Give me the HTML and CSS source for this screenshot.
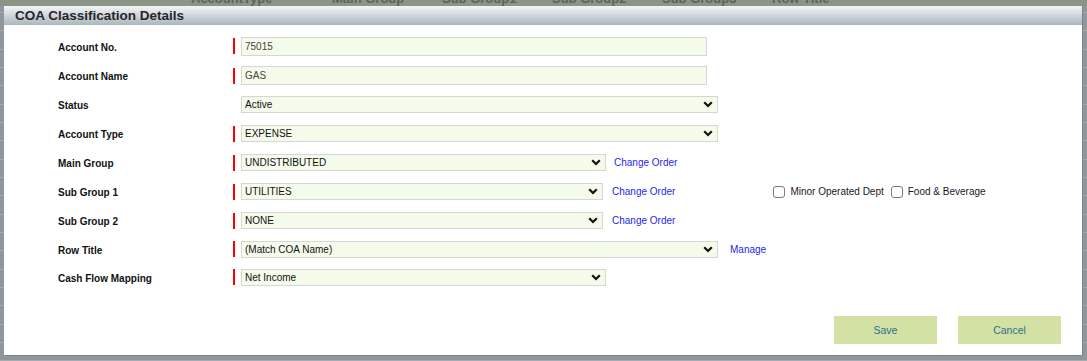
FILE: index.html
```html
<!DOCTYPE html>
<html lang="en">

<head>
    <meta charset="UTF-8">
    <meta name="viewport" content="width=device-width, initial-scale=1.0">
    <title>COA Classification Details</title>

    <link rel="stylesheet" href="styles.css">
</head>

<body>

    <div class="grid-head">
        <span class="col c-type">AccountType</span>
        <span class="col c-main">Main Group</span>
        <span class="col c-sub">Sub Group1</span>
        <span class="col c-sub">Sub Group2</span>
        <span class="col c-sub">Sub Group3</span>
        <span class="col">Row Title</span>
    </div>

    <div class="dialog">
        <div class="dialog-title">COA Classification Details</div>

        <form class="dialog-body">
            <div class="row first">
                <label class="row-label">Account No.</label>
                <span class="req"></span>
                <input class="field text-field" type="text" value="75015">
            </div>

            <div class="row">
                <label class="row-label">Account Name</label>
                <span class="req"></span>
                <input class="field text-field" type="text" value="GAS">
            </div>

            <div class="row">
                <label class="row-label">Status</label>
                <span class="req off"></span>
                <select class="field select-field wide">
                    <option>Active</option>
                </select>
            </div>

            <div class="row">
                <label class="row-label">Account Type</label>
                <span class="req"></span>
                <select class="field select-field wide">
                    <option>EXPENSE</option>
                </select>
            </div>

            <div class="row">
                <label class="row-label">Main Group</label>
                <span class="req"></span>
                <select class="field select-field group main">
                    <option>UNDISTRIBUTED</option>
                </select>
                <a href="#" class="link">Change Order</a>
            </div>

            <div class="row">
                <label class="row-label">Sub Group 1</label>
                <span class="req"></span>
                <select class="field select-field group">
                    <option>UTILITIES</option>
                </select>
                <a href="#" class="link">Change Order</a>
                <div class="checks">
                    <label class="check"><input type="checkbox"> Minor Operated Dept</label>
                    <label class="check"><input type="checkbox"> Food &amp; Beverage</label>
                </div>
            </div>

            <div class="row">
                <label class="row-label">Sub Group 2</label>
                <span class="req"></span>
                <select class="field select-field group">
                    <option>NONE</option>
                </select>
                <a href="#" class="link">Change Order</a>
            </div>

            <div class="row tight">
                <label class="row-label">Row Title</label>
                <span class="req"></span>
                <select class="field select-field wide">
                    <option>(Match COA Name)</option>
                </select>
                <a href="#" class="link manage">Manage</a>
            </div>

            <div class="row tight">
                <label class="row-label">Cash Flow Mapping</label>
                <span class="req"></span>
                <select class="field select-field group main">
                    <option>Net Income</option>
                </select>
            </div>
        </form>

        <div class="dialog-footer">
            <button type="button" class="btn">Save</button>
            <button type="button" class="btn">Cancel</button>
        </div>
    </div>

</body>
</html>
```

FILE: styles.css
```css
body {
    font-family: "Liberation Sans", Arial, sans-serif;
    margin: 0;
    padding: 0;
    height: 361px;
    overflow: hidden;
    background-color: #8f979d;
    background-image: repeating-linear-gradient(to bottom,
            transparent 0, transparent 12px,
            #a4acb1 12px, #a4acb1 13px,
            transparent 13px, transparent 18.33px);
}

/* grid behind the dialog, only the bottom of its header shows */
.grid-head {
    height: 6px;
    overflow: hidden;
    background-color: #8a9587;
    padding-left: 191px;
    display: flex;
    align-items: flex-start;
    white-space: nowrap;
}

.col {
    font-size: 13px;
    font-weight: bold;
    color: #5a6554;
    line-height: 13px;
    margin-top: -8px;
}

.c-type {
    width: 141px;
}

.c-main {
    width: 110px;
}

.c-sub {
    width: 110px;
}

.dialog {
    margin-left: 4px;
    width: 1078px;
    height: 349px;
    background-color: #fff;
    display: flex;
    flex-direction: column;
    box-shadow: 1px 0 0 #7b848a, 0 1px 0 #7b848a;
}

.dialog-title {
    height: 19px;
    line-height: 19px;
    padding-left: 11px;
    font-size: 13.5px;
    font-weight: bold;
    color: #262626;
    background: linear-gradient(to bottom, #f4f5f7, #aab6be);
}

.dialog-body {
    flex: 1;
    margin: 0;
    padding: 6px 0 0 54px;
}

.row {
    height: 29px;
    display: flex;
    align-items: center;
}

.row.first {
    height: 30px;
}

.row.tight {
    height: 28px;
}

.row-label {
    width: 175px;
    padding-top: 2px;
    font-size: 10px;
    font-weight: bold;
    color: #111;
}

.req {
    width: 2px;
    height: 16px;
    background-color: #f00;
    margin-right: 6px;
}

    .req.off {
        visibility: hidden;
    }

.field {
    box-sizing: border-box;
    margin: 0;
    border: 1px solid #d6d6d6;
    background-color: #f5fbeb;
    font-family: "Liberation Sans", Arial, sans-serif;
    font-size: 10px;
    padding: 0 3px;
    outline: none;
}

.text-field {
    width: 466px;
    height: 19px;
    color: #444;
}

.select-field {
    height: 17px;
    color: #111;
    -webkit-appearance: none;
    appearance: none;
    border-radius: 0;
    background-image: url("data:image/svg+xml;utf8,<svg xmlns='http://www.w3.org/2000/svg' width='10' height='7' viewBox='0 0 10 7'><path d='M1.2 1.2l3.8 3.8l3.8-3.8' fill='none' stroke='%23111' stroke-width='2.2'/></svg>");
    background-repeat: no-repeat;
    background-position: right 4px center;
}

    .select-field.wide {
        width: 477px;
    }

    .select-field.group {
        width: 362px;
    }

    .select-field.main {
        width: 365px;
    }

.link {
    font-size: 10px;
    color: #1f1ff0;
    text-decoration: none;
    margin-left: 9px;
}

    .select-field.main + .link {
        margin-left: 8px;
    }

    .link.manage {
        margin-left: 12px;
    }

.checks {
    display: flex;
    margin-left: 98px;
}

.check {
    display: flex;
    align-items: center;
    font-size: 10px;
    color: #1a1a1a;
    margin-right: 7px;
}

    .check input {
        -webkit-appearance: none;
        appearance: none;
        width: 12px;
        height: 12px;
        margin: 0 5px 0 0;
        border: 1px solid #7a7a7a;
        border-radius: 3px;
        background-color: #fff;
    }

.dialog-footer {
    display: flex;
    justify-content: flex-end;
    gap: 21px;
    padding: 0 21px 11px 0;
}

.btn {
    width: 103px;
    height: 28px;
    border: none;
    background-color: #d3e1a4;
    color: #2e6f8e;
    font-family: "Liberation Sans", Arial, sans-serif;
    font-size: 10.5px;
    cursor: pointer;
}

    .btn:hover {
        background-color: #c6d690;
    }
```
